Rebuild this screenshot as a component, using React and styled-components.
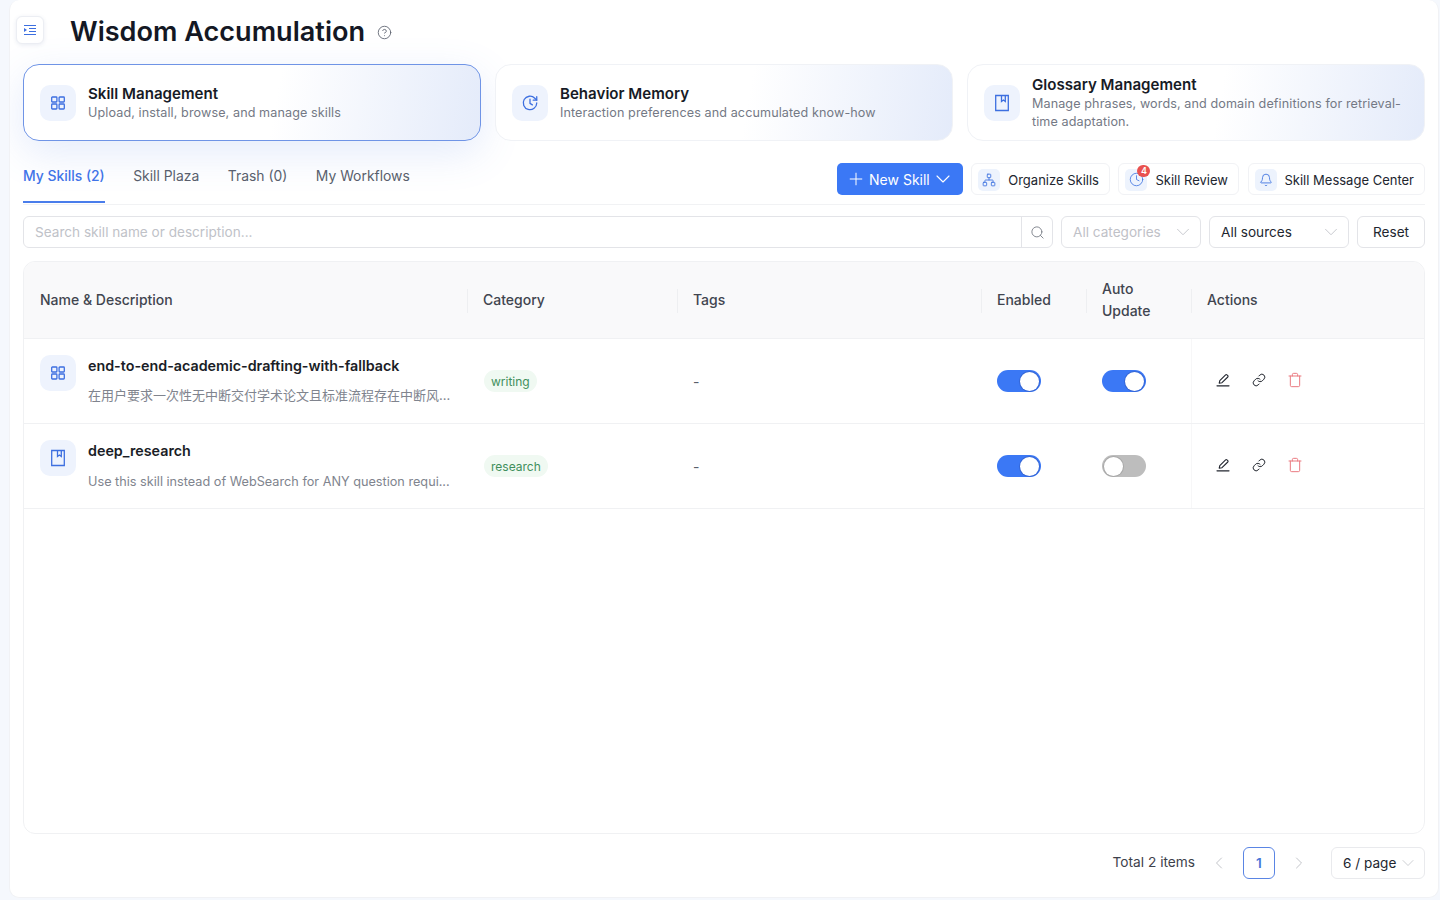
import React from 'react';
import styled, { createGlobalStyle } from 'styled-components';
import {
  Plus, ChevronDown, ChevronLeft, ChevronRight, Network, Clock,
  Bell, Search, Link, Trash, CircleHelp,
} from 'lucide-react';

const GlobalStyle = createGlobalStyle`
  html, body { margin: 0; padding: 0; height: 100%; }
  body {
    background: #f5f8fd;
    font-family: Inter, "Noto Sans CJK SC", sans-serif;
    color: #1a1d26;
    overflow: hidden;
  }
  * { box-sizing: border-box; }
`;

const Page = styled.div`
  height: 900px;
  padding: 0 1px 2px 9px;
`;

const Panel = styled.main`
  position: relative;
  height: 100%;
  background: #fff;
  border-radius: 10px;
  border: 1px solid #f1f2f5;
  border-top: none;
  padding: 0 13px 0 13px;
  display: flex;
  flex-direction: column;
  overflow: hidden;
`;

const SidebarToggle = styled.button`
  position: absolute;
  left: 6px;
  top: 16px;
  width: 28px;
  height: 28px;
  border: 1px solid #eceef3;
  border-radius: 6px;
  background: #fff;
  box-shadow: 0 1px 4px rgba(40, 70, 130, 0.1);
  display: flex;
  align-items: center;
  justify-content: center;
  color: #3d6fe0;
  padding: 0;
`;

const TitleRow = styled.header`
  height: 64px;
  display: flex;
  align-items: center;
  padding-left: 47px;
  gap: 12px;
`;

const Title = styled.h1`
  margin: 0;
  font-size: 27.1px;
  line-height: 34px;
  font-weight: 600;
  color: #141824;
`;

const HelpIcon = styled(CircleHelp)`
  color: #5e6470;
`;

const Cards = styled.section`
  display: grid;
  grid-template-columns: repeat(3, 1fr);
  gap: 14px;
`;

const Card = styled.div`
  position: relative;
  height: 77px;
  border-radius: 16px;
  border: 1px solid ${(p) => (p.$active ? '#6f94e6' : '#f0f2f6')};
  background: linear-gradient(100deg, #fff 55%, #e4ebfa 100%);
  box-shadow: ${(p) => (p.$active ? '0 12px 40px rgba(90, 130, 230, 0.16)' : 'none')};
  display: flex;
  align-items: center;
  gap: 12px;
  padding: 0 16px;
`;

const IconTile = styled.div`
  flex: none;
  width: 36px;
  height: 36px;
  border-radius: 10px;
  background: #eef3fd;
  color: #3d6fe0;
  display: flex;
  align-items: center;
  justify-content: center;
`;

const CardName = styled.div`
  font-size: 15.1px;
  line-height: 19px;
  font-weight: 600;
  color: #171b26;
`;

const CardDesc = styled.div`
  margin-top: 1px;
  font-size: 12.6px;
  line-height: 18px;
  color: #747985;
  letter-spacing: 0.1px;
`;

const TabBar = styled.div`
  height: 64px;
  border-bottom: 1px solid #f1f2f4;
  display: flex;
  justify-content: space-between;
  align-items: flex-start;
  padding-top: 22px;
`;

const Tabs = styled.nav`
  display: flex;
  gap: 28.5px;
`;

const Tab = styled.a`
  display: block;
  height: 40px;
  padding-top: 5px;
  font-size: 13.9px;
  line-height: 17px;
  font-weight: ${(p) => (p.$active ? 500 : 400)};
  color: ${(p) => (p.$active ? '#3f74e8' : '#5a5f6b')};
  border-bottom: ${(p) => (p.$active ? '2px solid #4a7deb' : '2px solid transparent')};
`;

const Toolbar = styled.div`
  display: flex;
  gap: 8.5px;
`;

const PrimaryButton = styled.button`
  height: 32px;
  padding: 0 8px 0 9px;
  border: none;
  border-radius: 5px;
  background: #3b78f5;
  color: #fff;
  font: 400 14px Inter, sans-serif;
  display: flex;
  align-items: center;
  gap: 3px;

  svg:last-child {
    margin-left: -2px;
  }
`;

const ToolButton = styled.button`
  position: relative;
  height: 32px;
  padding: 1px 10px 0 6px;
  border: 1px solid #f1f2f5;
  border-radius: 6px;
  background: #fff;
  color: #22262f;
  font: 400 13px Inter, sans-serif;
  display: flex;
  align-items: center;
  gap: 8px;
`;

const ToolIcon = styled.span`
  width: 22px;
  height: 22px;
  border-radius: 5px;
  background: #edf3fd;
  color: #3f74e0;
  display: flex;
  align-items: center;
  justify-content: center;
`;

const CountBadge = styled.span`
  position: absolute;
  left: 18px;
  top: 1px;
  width: 13px;
  height: 12px;
  border-radius: 7px;
  background: #e9514f;
  color: #fff;
  font-size: 9px;
  line-height: 12px;
  font-weight: 600;
  text-align: center;
`;

const FilterRow = styled.div`
  display: flex;
  gap: 8px;
  margin-top: 11px;
  height: 32px;
`;

const SearchBox = styled.div`
  flex: 1;
  display: flex;
  border: 1px solid #e3e4e8;
  border-radius: 6px;
  background: #fff;
`;

const SearchInput = styled.input`
  flex: 1;
  border: none;
  outline: none;
  background: transparent;
  padding: 0 11px;
  font: 400 13.6px Inter, sans-serif;

  &::placeholder {
    color: #c0c2c8;
  }
`;

const SearchAddon = styled.div`
  width: 31px;
  border-left: 1px solid #e3e4e8;
  color: #7d818a;
  display: flex;
  align-items: center;
  justify-content: center;
`;

const Select = styled.div`
  width: ${(p) => p.$width || 140}px;
  height: 100%;
  padding: 0 11px;
  border: 1px solid #e3e4e8;
  border-radius: 6px;
  background: #fff;
  display: flex;
  align-items: center;
  justify-content: space-between;
  font-size: 13.6px;
  white-space: nowrap;
  color: ${(p) => (p.$muted ? '#bfc1c7' : '#22262f')};

  svg {
    flex: none;
    margin-right: -5px;
    color: #c3c5ca;
  }
`;

const ResetButton = styled.button`
  width: 68px;
  border: 1px solid #e3e4e8;
  border-radius: 6px;
  background: #fff;
  color: #22262f;
  font: 400 13.6px Inter, sans-serif;
  padding: 0;
`;

const TableCard = styled.section`
  flex: 1;
  min-height: 0;
  margin-top: 13px;
  border: 1px solid #f0f1f3;
  border-radius: 12px;
  overflow: hidden;
`;

const COLUMNS = '443px 210px 304px 105px 105px 1fr';

const HeadRow = styled.div`
  display: grid;
  grid-template-columns: ${COLUMNS};
  height: 77px;
  background: #f9f9fa;
  border-bottom: 1px solid #f0f1f3;
`;

const HeadCell = styled.div`
  position: relative;
  display: flex;
  align-items: center;
  padding: 0 16px;
  font-size: 14px;
  line-height: 22px;
  font-weight: 500;
  color: #41454f;

  &:not(:first-child)::before {
    content: '';
    position: absolute;
    left: 0;
    top: 27px;
    height: 24px;
    width: 1px;
    background: #eeeff1;
  }
`;

const Row = styled.div`
  display: grid;
  grid-template-columns: ${COLUMNS};
  height: 85px;
  border-bottom: 1px solid #f0f1f3;
`;

const Cell = styled.div`
  display: flex;
  align-items: center;
  padding: 0 16px;
  min-width: 0;
  font-size: 14px;
  color: #5a5f6b;
`;

const NameCell = styled.div`
  display: flex;
  gap: 12px;
  padding: 16px 16px 0;
  min-width: 0;
`;

const NameBlock = styled.div`
  min-width: 0;
  flex: 1;
`;

const SkillName = styled.div`
  font-size: 14.3px;
  line-height: 22px;
  font-weight: 600;
  color: #1a1d26;
`;

const SkillDesc = styled.div`
  margin-top: ${(p) => (p.$cjk ? 8 : 10)}px;
  font-size: ${(p) => (p.$cjk ? 13 : 12.7)}px;
  line-height: 20px;
  color: #80848e;
  white-space: nowrap;
`;

const TagPill = styled.span`
  margin-left: 1px;
  padding: 0 7px;
  height: 22px;
  line-height: 23px;
  border-radius: 11px;
  background: #f0f9f2;
  color: #3f8f5c;
  font-size: 12px;
`;

const SwitchTrack = styled.span`
  display: flex;
  justify-content: ${(p) => (p.$on ? 'flex-end' : 'flex-start')};
  align-items: center;
  width: 44px;
  height: 22px;
  padding: 0 2px;
  border-radius: 11px;
  background: ${(p) => (p.$on ? '#3b78f5' : '#bdbdbd')};
`;

const SwitchKnob = styled.span`
  width: 19px;
  height: 19px;
  border-radius: 50%;
  background: #fff;
  box-shadow: 0 0 0 1px ${(p) => (p.$on ? '#3566d6' : '#a8a8a8')};
`;

const ActionsCell = styled(Cell)`
  gap: 20px;
  border-left: 1px solid #f7f7f8;
  padding-left: 23px;
  padding-bottom: 2px;
  color: #22262f;
`;

const ActionIcon = styled.span`
  width: 16px;
  height: 16px;
  display: flex;
  align-items: center;
  justify-content: center;
  color: ${(p) => (p.$danger ? '#ea7a80' : '#22262f')};
`;

const Pager = styled.footer`
  height: 63px;
  padding-bottom: 6px;
  display: flex;
  align-items: center;
  justify-content: flex-end;
  font-size: 13.7px;
  color: #3d414b;
`;

const PagerTotal = styled.span`
  margin: 0 16px 2px 0;
`;

const PagerArrow = styled.span`
  width: 16px;
  display: flex;
  justify-content: center;
  color: #c3c5ca;

  svg {
    flex: none;
  }
`;

const PageNumber = styled.span`
  width: 32px;
  height: 32px;
  margin: 0 16px;
  border: 1px solid #5a85e4;
  border-radius: 6px;
  color: #4a76d8;
  font-weight: 600;
  display: flex;
  align-items: center;
  justify-content: center;
`;

const PageSize = styled(Select)`
  margin-left: 24px;
  height: 32px;
  border-color: #e9eaed;
`;

const IndentIcon = () => (
  <svg width="14" height="14" viewBox="0 0 14 14" fill="none" stroke="currentColor" strokeWidth="1.2">
    <path d="M1 2.5h12M6 5.5h7M6 8.5h7M1 11.5h12" />
    <path d="M1 5l3 2-3 2z" fill="currentColor" stroke="none" />
  </svg>
);

const GridIcon = () => (
  <svg width="16" height="16" viewBox="0 0 16 16" fill="none" stroke="currentColor" strokeWidth="1.3">
    <rect x="1.7" y="2" width="5.2" height="5" rx="0.7" />
    <rect x="9.1" y="2" width="5.2" height="5" rx="0.7" />
    <rect x="1.7" y="9" width="5.2" height="5" rx="0.7" />
    <rect x="9.1" y="9" width="5.2" height="5" rx="0.7" />
  </svg>
);

const MemoryIcon = () => (
  <svg width="18" height="18" viewBox="0 0 24 24" fill="none" stroke="currentColor" strokeWidth="1.7" strokeLinecap="round" strokeLinejoin="round">
    <path d="M21 12a9 9 0 1 1-2.6-6.4L21 8.2" />
    <path d="M21 3.5v4.7h-4.7" />
    <path d="M12 7v5.5l3.2 2" />
  </svg>
);

const BookIcon = () => (
  <svg width="16" height="18" viewBox="0 0 16 18" fill="none" stroke="currentColor" strokeWidth="1.3">
    <path d="M1.7 1.5h12.6v15H1.7z" />
    <path d="M7.5 1.5v6l1.9-1.4 1.9 1.4v-6" />
  </svg>
);

const PenIcon = () => (
  <svg width="16" height="16" viewBox="0 0 16 16" fill="none" stroke="currentColor" strokeWidth="1.1" strokeLinejoin="round" strokeLinecap="round">
    <path d="M4.2 11.2 4.8 8.6 10.6 2.8a.9.9 0 0 1 1.3 0l.9.9a.9.9 0 0 1 0 1.3L7 10.7z" />
    <path d="M2 13.8h12" strokeWidth="1.2" />
  </svg>
);

const cards = [
  { name: 'Skill Management', desc: 'Upload, install, browse, and manage skills', Icon: GridIcon, active: true },
  { name: 'Behavior Memory', desc: 'Interaction preferences and accumulated know-how', Icon: MemoryIcon },
  { name: 'Glossary Management', desc: 'Manage phrases, words, and domain definitions for retrieval-time adaptation.', Icon: BookIcon },
];

const skills = [
  { name: 'end-to-end-academic-drafting-with-fallback', desc: '在用户要求一次性无中断交付学术论文且标准流程存在中断风...', cjk: true, tag: 'writing', Icon: GridIcon, auto: true },
  { name: 'deep_research', desc: 'Use this skill instead of WebSearch for ANY question requi...', tag: 'research', Icon: BookIcon, auto: false },
];

const Switch = ({ on }) => (
  <SwitchTrack $on={on}>
    <SwitchKnob $on={on} />
  </SwitchTrack>
);

export default function App() {
  return (
    <Page>
      <GlobalStyle />
      <Panel>
        <SidebarToggle aria-label="Toggle sidebar">
          <IndentIcon />
        </SidebarToggle>

        <TitleRow>
          <Title>Wisdom Accumulation</Title>
          <HelpIcon size={15} strokeWidth={1.4} />
        </TitleRow>

        <Cards>
          {cards.map(({ name, desc, Icon, active }) => (
            <Card key={name} $active={active}>
              <IconTile>
                <Icon />
              </IconTile>
              <div>
                <CardName>{name}</CardName>
                <CardDesc>{desc}</CardDesc>
              </div>
            </Card>
          ))}
        </Cards>

        <TabBar>
          <Tabs>
            <Tab $active>My Skills (2)</Tab>
            <Tab>Skill Plaza</Tab>
            <Tab>Trash (0)</Tab>
            <Tab>My Workflows</Tab>
          </Tabs>
          <Toolbar>
            <PrimaryButton>
              <Plus size={20} strokeWidth={1.2} />
              New Skill
              <ChevronDown size={24} strokeWidth={1.1} />
            </PrimaryButton>
            <ToolButton>
              <ToolIcon><Network size={14} strokeWidth={1.5} /></ToolIcon>
              Organize Skills
            </ToolButton>
            <ToolButton>
              <ToolIcon><Clock size={15} strokeWidth={1.3} /></ToolIcon>
              <CountBadge>4</CountBadge>
              Skill Review
            </ToolButton>
            <ToolButton>
              <ToolIcon><Bell size={14} strokeWidth={1.5} /></ToolIcon>
              Skill Message Center
            </ToolButton>
          </Toolbar>
        </TabBar>

        <FilterRow>
          <SearchBox>
            <SearchInput placeholder="Search skill name or description..." />
            <SearchAddon><Search size={15} strokeWidth={1.5} /></SearchAddon>
          </SearchBox>
          <Select $muted>
            All categories
            <ChevronDown size={22} strokeWidth={1} />
          </Select>
          <Select>
            All sources
            <ChevronDown size={22} strokeWidth={1} />
          </Select>
          <ResetButton>Reset</ResetButton>
        </FilterRow>

        <TableCard>
          <HeadRow>
            <HeadCell>Name &amp; Description</HeadCell>
            <HeadCell>Category</HeadCell>
            <HeadCell>Tags</HeadCell>
            <HeadCell>Enabled</HeadCell>
            <HeadCell>Auto Update</HeadCell>
            <HeadCell>Actions</HeadCell>
          </HeadRow>
          {skills.map(({ name, desc, cjk, tag, Icon, auto }) => (
            <Row key={name}>
              <NameCell>
                <IconTile>
                  <Icon />
                </IconTile>
                <NameBlock>
                  <SkillName>{name}</SkillName>
                  <SkillDesc $cjk={cjk}>{desc}</SkillDesc>
                </NameBlock>
              </NameCell>
              <Cell><TagPill>{tag}</TagPill></Cell>
              <Cell>-</Cell>
              <Cell><Switch on /></Cell>
              <Cell><Switch on={auto} /></Cell>
              <ActionsCell>
                <ActionIcon><PenIcon /></ActionIcon>
                <ActionIcon><Link size={14} strokeWidth={1.7} /></ActionIcon>
                <ActionIcon $danger><Trash size={16} strokeWidth={1.5} /></ActionIcon>
              </ActionsCell>
            </Row>
          ))}
        </TableCard>

        <Pager>
          <PagerTotal>Total 2 items</PagerTotal>
          <PagerArrow><ChevronLeft size={20} strokeWidth={1.2} /></PagerArrow>
          <PageNumber>1</PageNumber>
          <PagerArrow><ChevronRight size={20} strokeWidth={1.2} /></PagerArrow>
          <PageSize $width={94}>
            6 / page
            <ChevronDown size={20} strokeWidth={1} />
          </PageSize>
        </Pager>
      </Panel>
    </Page>
  );
}
